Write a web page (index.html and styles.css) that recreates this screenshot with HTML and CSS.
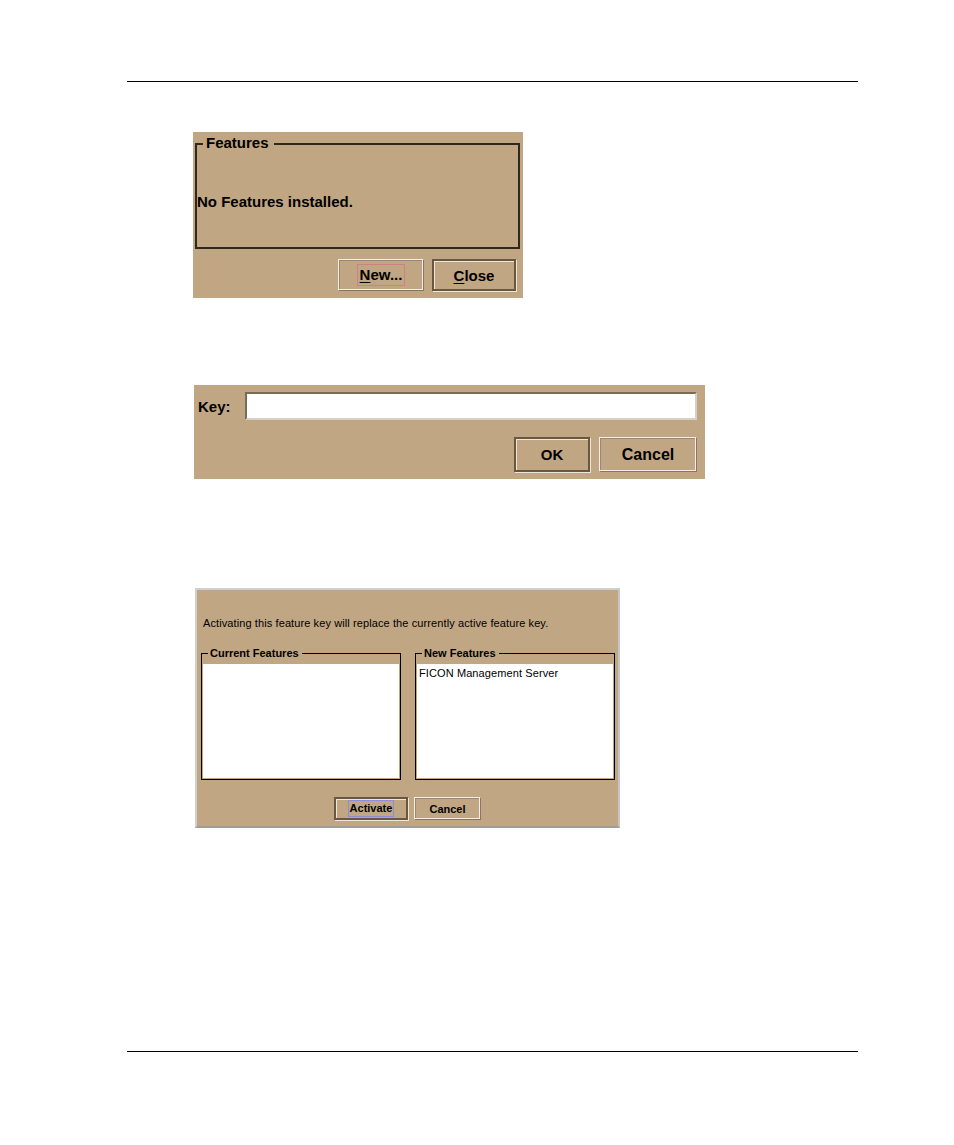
FILE: index.html
```html
<!DOCTYPE html>
<html>
<head>
<meta charset="utf-8">
<link rel="stylesheet" href="styles.css">
</head>
<body>
<div class="page">
  <div class="rule"></div>

  <div class="dlg dlg1">
    <div class="group g1">
      <div class="gtitle">Features</div>
      <div class="msg">No Features installed.</div>
    </div>
    <div class="btnrow">
      <button class="btn b-new"><span class="focus"><u>N</u>ew...</span></button>
      <button class="btn def b-close"><u>C</u>lose</button>
    </div>
  </div>

  <div class="dlg dlg2">
    <div class="keyrow">
      <span class="klabel">Key:</span>
      <div class="field"></div>
    </div>
    <div class="btnrow">
      <button class="btn def b-ok">OK</button>
      <button class="btn b-cancel">Cancel</button>
    </div>
  </div>

  <div class="dlg dlg3">
    <div class="note">Activating this feature key will replace the currently active feature key.</div>
    <div class="lists">
      <div class="group g3">
        <div class="gtitle">Current Features</div>
        <div class="list"></div>
      </div>
      <div class="group g3">
        <div class="gtitle">New Features</div>
        <div class="list"><div class="item">FICON Management Server</div></div>
      </div>
    </div>
    <div class="btnrow center">
      <button class="btn def small b-act"><span class="focus blue">Activate</span></button>
      <button class="btn small b-can3">Cancel</button>
    </div>
  </div>

  <div class="rule bottom"></div>
</div>
</body>
</html>
```

FILE: styles.css
```css
html, body {
  margin: 0;
  padding: 0;
  background: #ffffff;
}

.page {
  width: 954px;
  height: 1145px;
  padding-top: 81px;
  box-sizing: border-box;
  font-family: "Liberation Sans", Arial, sans-serif;
  color: #000;
}

.rule {
  margin-left: 127px;
  width: 731px;
  height: 1px;
  background: #000;
}

.rule.bottom {
  margin-top: 223px;
}

.dlg {
  background: #c1a684;
  box-sizing: border-box;
  display: flex;
  flex-direction: column;
}

/* ---------- titled groups ---------- */
.group {
  border: 2px solid #2e2820;
  box-sizing: border-box;
  display: flex;
  flex-direction: column;
}

.gtitle {
  align-self: flex-start;
  background: #c1a684;
  font-weight: bold;
  padding: 0 4px;
}

/* ---------- dialog 1 ---------- */
.dlg1 {
  margin-left: 193px;
  margin-top: 50px;
  width: 330px;
  height: 166px;
}

.g1 {
  margin: 11px 3px 0 2px;
  height: 106px;
}

.g1 .gtitle {
  font-size: 15px;
  line-height: 16px;
  margin-top: -10px;
  margin-left: 6px;
  padding: 0 5px 0 3px;
}

.msg {
  font-size: 15px;
  font-weight: bold;
  line-height: 16px;
  margin-top: 43px;
  padding-left: 0;
}

.btnrow {
  display: flex;
  justify-content: flex-end;
}

.dlg1 .btnrow {
  margin-top: 10px;
  padding-right: 7px;
  gap: 8px;
}

/* ---------- buttons ---------- */
.btn {
  font-family: "Liberation Sans", Arial, sans-serif;
  font-weight: bold;
  font-size: 15px;
  color: #000;
  background: #c1a684;
  box-sizing: border-box;
  padding: 0;
  display: flex;
  align-items: center;
  justify-content: center;
  border: 1px solid;
  border-color: #f4eee6 #8a7660 #8a7660 #f4eee6;
  box-shadow: inset -1px -1px 0 #f4eee6, inset 1px 1px 0 #9c8770;
}

.btn.def {
  border: 2px solid #6b573f;
  box-shadow: inset 1px 1px 0 #efe6da, 1px 1px 0 #efe6da;
}

.btn u {
  text-decoration: underline;
  text-underline-offset: 2px;
}

.focus {
  display: block;
  border: 1px solid #cf7f8c;
  line-height: 20px;
  padding: 0 2px;
}

.focus.blue {
  border-color: #8c8cd8;
  line-height: 15px;
  padding: 0 1px;
}

.b-new { width: 86px; height: 32px; }
.b-close { width: 84px; height: 32px; }

/* ---------- dialog 2 ---------- */
.dlg2 {
  margin-left: 194px;
  margin-top: 87px;
  width: 511px;
  height: 94px;
}

.keyrow {
  display: flex;
  align-items: center;
  padding: 7px 8px 0 4px;
}

.klabel {
  font-size: 15px;
  font-weight: bold;
  width: 47px;
}

.field {
  flex: 1;
  height: 28px;
  background: #fff;
  box-sizing: border-box;
  border: 2px solid;
  border-color: #7a6a56 #d8d0c6 #d8d0c6 #7a6a56;
}

.dlg2 .btnrow {
  margin-top: 17px;
  padding-right: 8px;
  gap: 9px;
}

.b-ok { width: 76px; height: 35px; }
.b-cancel { width: 98px; height: 35px; font-size: 16px; }

/* ---------- dialog 3 ---------- */
.dlg3 {
  margin-left: 195px;
  margin-top: 109px;
  width: 425px;
  height: 240px;
  border: 2px solid #cfcfcf;
  border-bottom-color: #9e9e9e;
  border-right-color: #c4c4c4;
  font-size: 11px;
}

.note {
  font-size: 11px;
  line-height: 13px;
  margin-top: 27px;
  padding-left: 6px;
  letter-spacing: 0.1px;
}

.lists {
  display: flex;
  gap: 14px;
  margin-top: 23px;
  padding-left: 4px;
}

.g3 {
  width: 200px;
  height: 127px;
  border: 1px solid #000;
  padding: 0 1px 1px 1px;
}

.g3 .gtitle {
  font-size: 11px;
  line-height: 12px;
  margin-top: -7px;
  margin-left: 5px;
  padding: 0 3px 0 2px;
}

.list {
  flex: 1;
  background: #fff;
  margin-top: 5px;
}

.item {
  font-size: 11px;
  line-height: 13px;
  padding: 3px 2px 0 2px;
  letter-spacing: 0.1px;
}

.btnrow.center {
  justify-content: center;
  gap: 6px;
  margin-top: 17px;
}

.btn.small {
  font-size: 11px;
  height: 23px;
}

.b-act { width: 74px; }
.b-can3 { width: 67px; }
```
